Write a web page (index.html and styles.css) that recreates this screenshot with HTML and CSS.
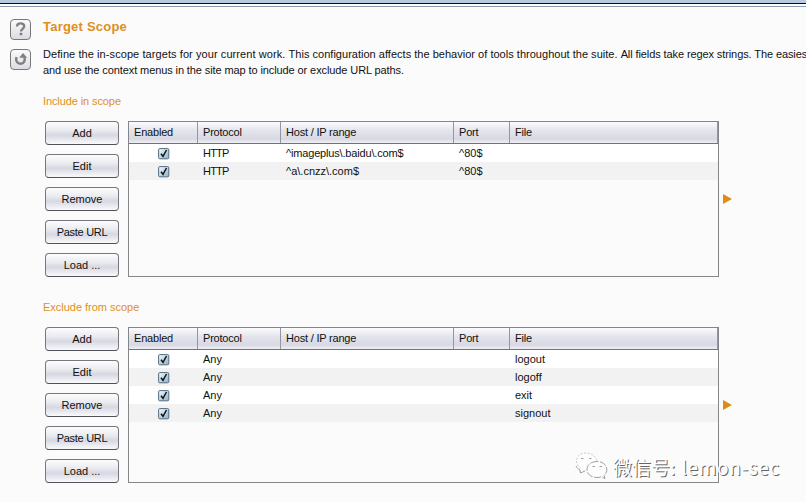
FILE: index.html
```html
<!DOCTYPE html>
<html lang="en">
<head>
<meta charset="utf-8">
<title>Target Scope</title>
<link rel="stylesheet" href="styles.css">
</head>
<body>
<svg class="defs" width="0" height="0" aria-hidden="true">
  <defs>
    <linearGradient id="boxfill" x1="0" y1="0" x2="1" y2="1"><stop offset="0" stop-color="#f4fafd"/><stop offset="1" stop-color="#8fb0c8"/></linearGradient>
    <symbol id="check" viewBox="0 0 12 12">
      <rect x=".6" y=".6" width="10.2" height="10.2" rx="1.2" fill="url(#boxfill)" stroke="#566c80"/>
      <path d="M3 5.800 5 8.300 8.500 2" fill="none" stroke="#101418" stroke-width="1.5"/>
    </symbol>
  </defs>
</svg>
<div class="topbar"></div>
<main class="page">
  <header class="intro">
    <div class="tools">
      <div class="tool"><svg width="20" height="20" viewBox="0 0 20 20"><path d="M7 7.600C7 5.200 8.500 4.300 10.500 4.300c2.200 0 3.700 1 3.700 2.900 0 2.600-3.200 2.600-3.200 5.200" fill="none" stroke="#808083" stroke-width="2.300"/><rect x="9.700" y="13.800" width="2.600" height="2.400" fill="#808083"/></svg></div>
      <div class="tool"><svg width="20" height="20" viewBox="0 0 20 20"><path d="M6.500 8.100C5.300 11.900 7.500 14.800 10.500 14.800c3.400 0 4.800-2.600 4-6.800" fill="none" stroke="#808083" stroke-width="2.500"/><path d="M9.200 8.800 13 4 17.200 8.800z" fill="#808083"/></svg></div>
    </div>
    <div class="copy">
      <h1>Target Scope</h1>
      <p><span class="s1">Define the in-scope targets for your current work. </span><span class="s2">This configuration affects the behavior of tools throughout the suite. </span><span class="s3">All fields take regex strings. The easies</span><br><span class="s4">and use the context menus in the site map to include or exclude URL paths.</span></p>
    </div>
  </header>
  <section class="scope">
    <h2>Include in scope</h2>
    <div class="editor">
      <div class="buttons"><button>Add</button><button>Edit</button><button>Remove</button><button class="wide">Paste URL</button><button>Load ...</button></div>
      <div class="table">
        <div class="row head"><span>Enabled</span><span>Protocol</span><span>Host / IP range</span><span>Port</span><span>File</span></div>
        <div class="row"><span class="tick"><svg width="12" height="12"><use href="#check"/></svg></span><span class="caps">HTTP</span><span class="host">^imageplus\.baidu\.com$</span><span>^80$</span><span></span></div>
        <div class="row"><span class="tick"><svg width="12" height="12"><use href="#check"/></svg></span><span class="caps">HTTP</span><span>^a\.cnzz\.com$</span><span>^80$</span><span></span></div>
      </div>
      <svg class="arrow" width="9" height="10"><path d="M0 0 9 5 0 10z" fill="#e28b13"/></svg>
    </div>
  </section>
  <section class="scope">
    <h2 class="exclude">Exclude from scope</h2>
    <div class="editor">
      <div class="buttons"><button>Add</button><button>Edit</button><button>Remove</button><button class="wide">Paste URL</button><button>Load ...</button></div>
      <div class="table">
        <div class="row head"><span>Enabled</span><span>Protocol</span><span>Host / IP range</span><span>Port</span><span>File</span></div>
        <div class="row"><span class="tick"><svg width="12" height="12"><use href="#check"/></svg></span><span>Any</span><span></span><span></span><span>logout</span></div>
        <div class="row"><span class="tick"><svg width="12" height="12"><use href="#check"/></svg></span><span>Any</span><span></span><span></span><span>logoff</span></div>
        <div class="row"><span class="tick"><svg width="12" height="12"><use href="#check"/></svg></span><span>Any</span><span></span><span></span><span>exit</span></div>
        <div class="row"><span class="tick"><svg width="12" height="12"><use href="#check"/></svg></span><span>Any</span><span></span><span></span><span>signout</span></div>
      </div>
      <svg class="arrow" width="9" height="10"><path d="M0 0 9 5 0 10z" fill="#e28b13"/></svg>
    </div>
  </section>
</main>
<div class="watermark">
  <svg width="34" height="28" viewBox="0 0 34 28" fill="#fdfdfd" stroke="#888" stroke-width=".8">
    <path stroke="#bbb" stroke-dasharray="2 1.5" d="M5 20 6 16.700C-2.500 10 2 1 11 1c6 0 10 3.500 11 8"/>
    <path d="M1 14C2 16 3 17 5 18L5.500 21 10 19"/>
    <path stroke-dasharray="7 1.5" d="M22 9.500c-6 0-10 3.500-10 8s4 8 10 8c1.500 0 3-.2 4.500-.8l3.500 1.800-1-3.200c6-5 2-13.800-7-13.800z"/>
    <path d="M6 6.500h2.500M14 6.500h2.500M17.500 14.500h2.500M24.500 14.500h2.500"/>
  </svg>
  <span class="account">微信号: <span class="latin">lemon-sec</span></span>
</div>
</body>
</html>
```

FILE: styles.css
```css
* { box-sizing: border-box; }
body {
  margin: 0;
  height: 502px;
  overflow: hidden;
  background: #fbfbfb;
  color: #111;
  font: 11px/16px "Liberation Sans", Arial, sans-serif;
}
.defs { position: absolute; }
.topbar {
  height: 7px;
  background: linear-gradient(#b7cbe0 0 3px, #080c14 3px 4px, #fff 4px 6px, #8e9bb4 6px 7px);
}
.page { padding-left: 10px; }
.intro { display: flex; height: 86px; padding-top: 12px; }
.tools { width: 33px; flex: none; }
.tool {
  width: 21px;
  height: 21px;
  margin-bottom: 9px;
  border: 1px solid #77787b;
  border-radius: 4px;
  background: linear-gradient(#fafafa, #dcdde2);
}
.tool svg { display: block; margin: -1px 0 0 -1px; }
.copy { white-space: nowrap; }
h1 { margin: 0; font-size: 13px; line-height: 16px; color: #e08f1c; letter-spacing: .22px; }
p { margin: 11px 0 0; }
.s1 { letter-spacing: .08px; }
.s2 { letter-spacing: .02px; }
.s3 { letter-spacing: -.1px; }
.s4 { letter-spacing: -.1px; }
h2 { margin: 0 0 12px 33px; font-weight: 400; font-size: 11px; line-height: 16px; color: #e08f1c; letter-spacing: -.1px; }
.exclude { letter-spacing: -.02px; }
.scope { height: 206px; }
.editor { display: flex; margin-left: 35px; height: 156px; }
.buttons { width: 74px; margin-right: 9px; display: flex; flex-direction: column; gap: 9px; }
button {
  height: 24px;
  padding: 0;
  border: 1px solid #77787d;
  border-bottom-color: #505159;
  border-radius: 4px;
  background: linear-gradient(#fdfdfe, #e9eaef 40%, #d6d7e1 60%, #fafafc);
  color: #111;
  font: inherit;
}
.wide { letter-spacing: -.3px; }
.table { width: 591px; border: 1px solid #85868c; }
.row { display: grid; grid-template-columns: 69px 83px 173px 56px 1fr; height: 18px; line-height: 18px; background: #fff; }
.row:nth-child(odd) { background: #f2f2f2; }
.row span { padding-left: 5px; white-space: nowrap; }
.row .tick { display: block; padding: 4px 0 0 29px; }
.row .caps { letter-spacing: -.8px; }
.row .host { letter-spacing: -.17px; }
.tick svg { display: block; }
.row.head { height: 22px; line-height: 20px; letter-spacing: -.2px; background: linear-gradient(#fcfcfd, #e4e5ec 40%, #d7d8e2 80%, #eeeef3); border-bottom: 1px solid #71727c; }
.head span { border-right: 1px solid #94959e; }
.arrow { margin: 73px 0 0 4px; }
.watermark {
  position: absolute;
  left: 575px;
  top: 452px;
  display: flex;
  gap: 4px;
  font: 19px/30px "Noto Sans CJK SC", sans-serif;
  color: #fff;
  text-shadow: 1px 1px 0 #666;
  white-space: nowrap;
}
.account { height: 30px; }
.latin { margin-left: 2px; letter-spacing: .65px; }
```
